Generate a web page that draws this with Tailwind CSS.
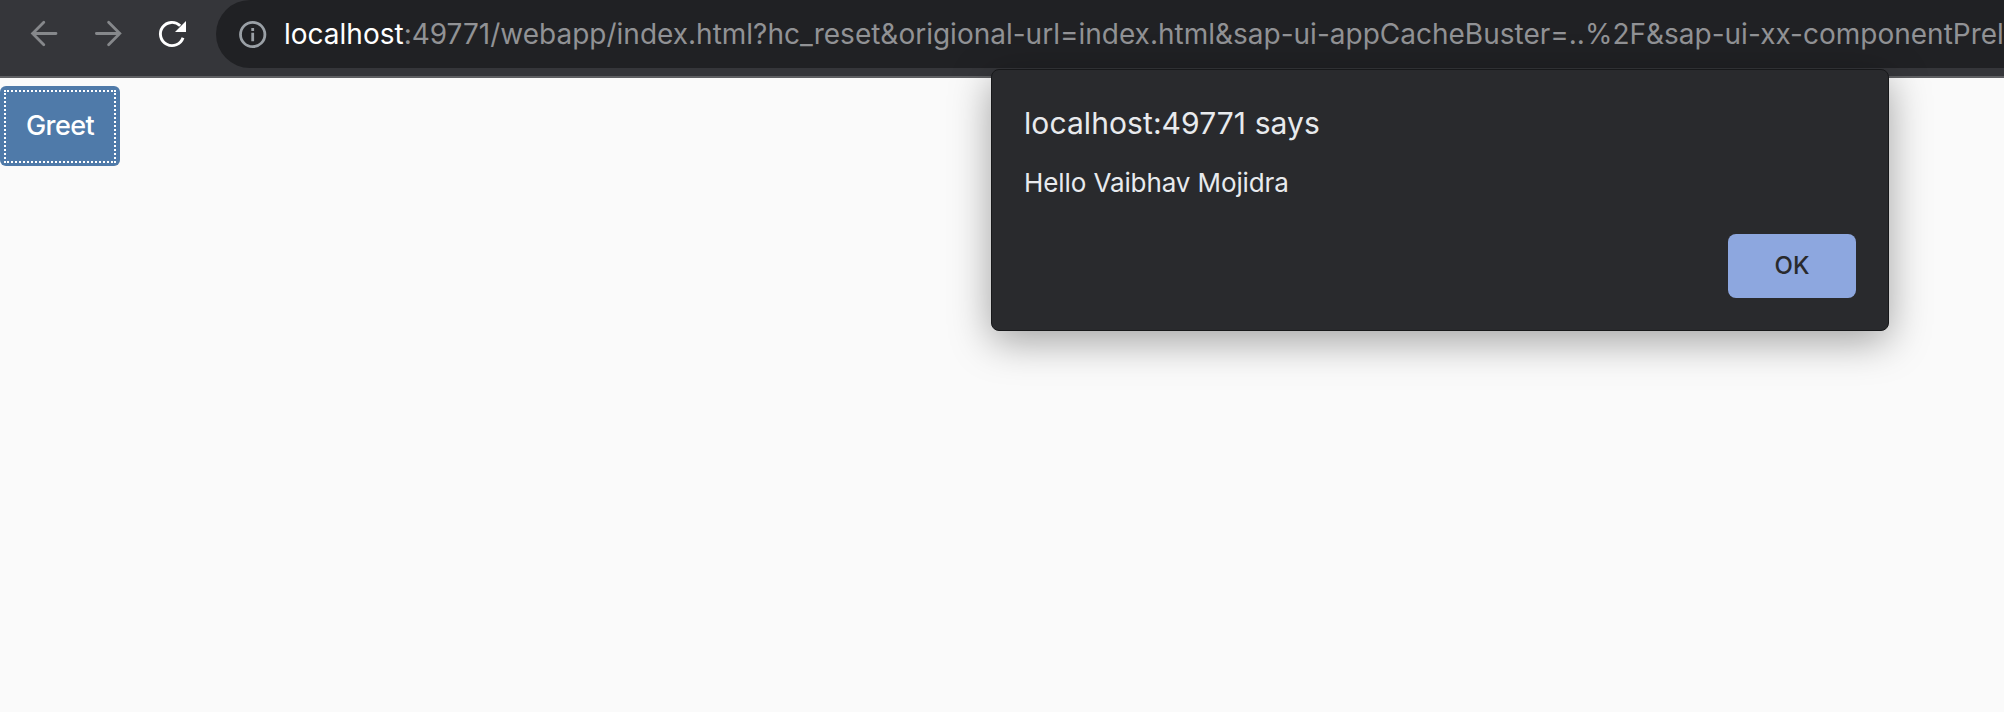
<!DOCTYPE html>
<html lang="en">
<head>
<meta charset="utf-8">
<title>Greet</title>
<script src="https://cdn.jsdelivr.net/npm/@tailwindcss/browser@4"></script>
</head>
<body class="relative h-[712px] w-[2004px] overflow-hidden bg-[#fafafa] font-['Inter',sans-serif]">
  <header class="flex h-[78px] items-start border-b-2 border-[#5f6063] bg-[#35363a]">
    <nav class="flex h-[68px] w-[216px] shrink-0 items-center pl-7">
      <svg class="h-8 w-8 shrink-0" viewBox="0 0 32 32" fill="none" stroke="#86888b" stroke-width="2.8" stroke-linecap="round"><path d="M28 15.5H4.6M15.8 4.2L4.6 15.5l11.2 11.3"/></svg>
      <svg class="ml-8 h-8 w-8 shrink-0" viewBox="0 0 32 32" fill="none" stroke="#86888b" stroke-width="2.8" stroke-linecap="round"><path d="M4.4 15.5h23.4M16.6 4.2l11.2 11.3-11.2 11.3"/></svg>
      <svg class="ml-8 h-8 w-8 shrink-0" viewBox="0 0 32 32"><path d="M27 19.7A11.6 11.6 0 1 1 24.2 7.8" fill="none" stroke="#fff" stroke-width="2.9"/><path d="M30 3v11H19z" fill="#fff"/></svg>
    </nav>
    <div class="flex h-[68px] min-w-0 flex-1 items-center overflow-hidden rounded-l-full bg-[#202124] pl-[22px]">
      <svg class="h-8 w-8 shrink-0" viewBox="0 0 32 32" fill="none" stroke="#9aa0a6" stroke-width="2.8"><circle cx="14.7" cy="16.5" r="12.2"/><path d="M14.7 14.8v8.4M14.7 10v3"/></svg>
      <div class="ml-[14px] text-[28px] leading-9 whitespace-nowrap text-[#919295]"><span class="text-white">localhost</span>:49771/webapp/index.html?hc_reset&amp;origional-url=index.html&amp;sap-ui-appCacheBuster=..%2F&amp;sap-ui-xx-componentPrel</div>
    </div>
  </header>

  <main class="pt-2">
    <button class="flex h-20 w-[120px] rounded-md bg-[#4f7aa9] p-1 text-white">
      <span class="flex h-[73px] w-[112px] items-center justify-center border-2 border-dotted border-white pb-px text-[27px] font-medium tracking-[-0.6px]">Greet</span>
    </button>
  </main>

  <section role="dialog" class="absolute top-[69px] left-[991px] flex h-[262px] w-[898px] flex-col rounded-lg border border-[#17181a] bg-[#292a2d] px-8 pt-[33px] text-[#e8eaed] shadow-[0_10px_40px_rgba(0,0,0,0.36)]">
    <h1 class="text-[30px] leading-10 tracking-[0.08px]">localhost:49771 says</h1>
    <p class="mt-6 text-[26px] leading-8 tracking-[-0.1px]">Hello Vaibhav Mojidra</p>
    <button class="mt-[35px] h-16 w-32 shrink-0 self-end rounded-lg bg-[#8da7df] text-[24px] font-medium text-[#292a2d]">OK</button>
  </section>
</body>
</html>
